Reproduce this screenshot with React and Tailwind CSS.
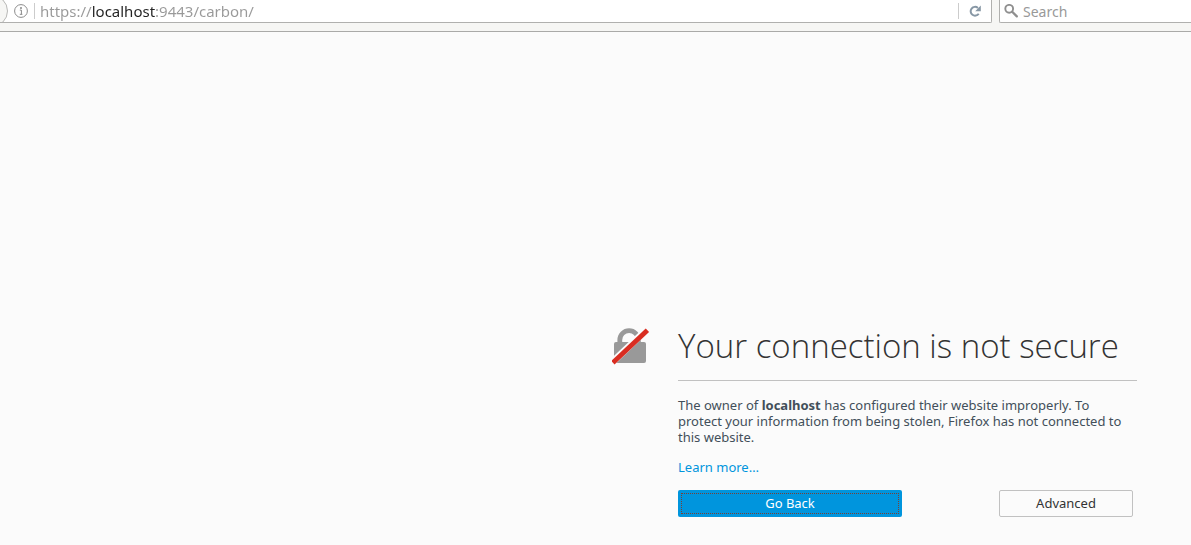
function InfoIcon() {
  return (
    <svg viewBox="0 0 14 14" className="size-3.5 shrink-0" fill="none" aria-hidden="true">
      <circle cx="7" cy="7" r="6.4" stroke="#8c8c8c" strokeWidth="1" />
      <circle cx="7" cy="4" r="0.95" fill="#808080" />
      <path d="M5.8 6.1h1.6v4.3M5.8 10.3h2.6" stroke="#8a8a8a" strokeWidth="1" />
    </svg>
  );
}

function ReloadIcon() {
  return (
    <svg viewBox="0 0 12 12" className="size-3" fill="none" aria-hidden="true">
      <path d="M9.7 8.7A4.4 4.4 0 1 1 8.9 2.9" stroke="#8797a5" strokeWidth="2" />
      <path d="M11.8 0.6v5.6H6.2z" fill="#8797a5" />
    </svg>
  );
}

function SearchIcon() {
  return (
    <svg viewBox="0 0 14 14" className="size-3.5 shrink-0" fill="none" aria-hidden="true">
      <circle cx="5.2" cy="4.8" r="3.9" stroke="#8f8f8f" strokeWidth="1.9" />
      <path d="M8.2 7.8l4.6 4.6" stroke="#8f8f8f" strokeWidth="2.3" strokeLinecap="round" />
    </svg>
  );
}

function InsecureLock() {
  return (
    <svg viewBox="0 0 38 38" className="size-[38px] shrink-0" fill="none" aria-hidden="true">
      <path d="M7.8 16v-4a9.3 9.3 0 0 1 18.6 0V16" stroke="#999" strokeWidth="4.8" />
      <rect x="2" y="14" width="32" height="21" rx="2" fill="#999" />
      <path d="M0 34.5L35.5 0.9" stroke="#fbfbfb" strokeWidth="6.8" />
      <path d="M0.9 34.8L35.4 2.2" stroke="#d92d21" strokeWidth="4.8" />
    </svg>
  );
}

export default function App() {
  return (
    <div className="min-h-screen overflow-x-hidden bg-[#fbfbfb] font-['Noto_Sans',sans-serif]">
      <header className="flex h-8 items-start gap-[7px] overflow-hidden border-b border-[#aaaaa8] bg-[#f6f6f4]">
        <div className="flex h-[23px] min-w-0 flex-1 items-center overflow-hidden rounded-br-xs border-r border-b border-[#b0b0ae] bg-white">
          <div className="-ml-6 size-8 shrink-0 rounded-full border border-[#b8b8b6] bg-[#f6f6f4]" />
          <button type="button" aria-label="Site information" className="ml-1.5 shrink-0">
            <InfoIcon />
          </button>
          <div className="ml-1.5 h-4 w-px shrink-0 bg-[#cccccc]" />
          <input
            type="text"
            aria-label="Address"
            defaultValue="https://localhost:9443/carbon/"
            className="ml-[5px] h-[22px] min-w-0 flex-1 bg-[linear-gradient(to_right,#999999_52px,#222222_52px,#222222_115px,#999999_115px)] bg-clip-text text-[15px] text-transparent outline-none"
          />
          <div className="h-4 w-px shrink-0 bg-[#cccccc]" />
          <button type="button" aria-label="Reload" className="flex w-8 shrink-0 justify-center">
            <ReloadIcon />
          </button>
        </div>
        <label className="flex h-[23px] w-48 shrink-0 items-center gap-[5px] rounded-bl-xs border-b border-l border-[#b0b0ae] bg-white pl-1">
          <SearchIcon />
          <input
            type="text"
            aria-label="Search"
            placeholder="Search"
            className="h-[22px] min-w-0 flex-1 text-[14px] outline-none placeholder:text-[#999999]"
          />
        </label>
      </header>

      <main className="flex justify-end pt-[296px] pr-[54px] pl-6">
        <div className="flex w-full max-w-[525px] items-start gap-7">
          <InsecureLock />
          <div className="min-w-0 flex-1">
            <h1 className="border-b border-[#c1c1c1] pb-4 font-['Open_Sans','Noto_Sans',sans-serif] text-[33px] leading-9 font-light whitespace-nowrap text-[#333333]">
              Your connection is not secure
            </h1>
            <p className="mt-4 pr-2.5 text-[13px] leading-4 text-[#424f5a]">
              The owner of <b>localhost</b> has configured their website improperly. To protect your
              information from being stolen, Firefox has not connected to this website.
            </p>
            <a href="#learn-more" className="mt-3.5 block text-[13px] leading-4 text-[#0095dd]">
              Learn more…
            </a>
            <div className="mt-[15px] mr-1 flex justify-between">
              <button
                type="button"
                className="h-[27px] w-56 rounded-xs bg-[#0095dd] p-[3px] text-[13px] leading-4 text-white"
              >
                <span className="flex h-[21px] items-center justify-center border border-dotted border-[#7a4035] pb-0.5">
                  Go Back
                </span>
              </button>
              <button
                type="button"
                className="h-[27px] w-[134px] rounded-xs border border-[#c1c1c1] bg-[#fbfbfb] pb-0.5 text-[13px] leading-4 text-[#333333]"
              >
                Advanced
              </button>
            </div>
          </div>
        </div>
      </main>
    </div>
  );
}
